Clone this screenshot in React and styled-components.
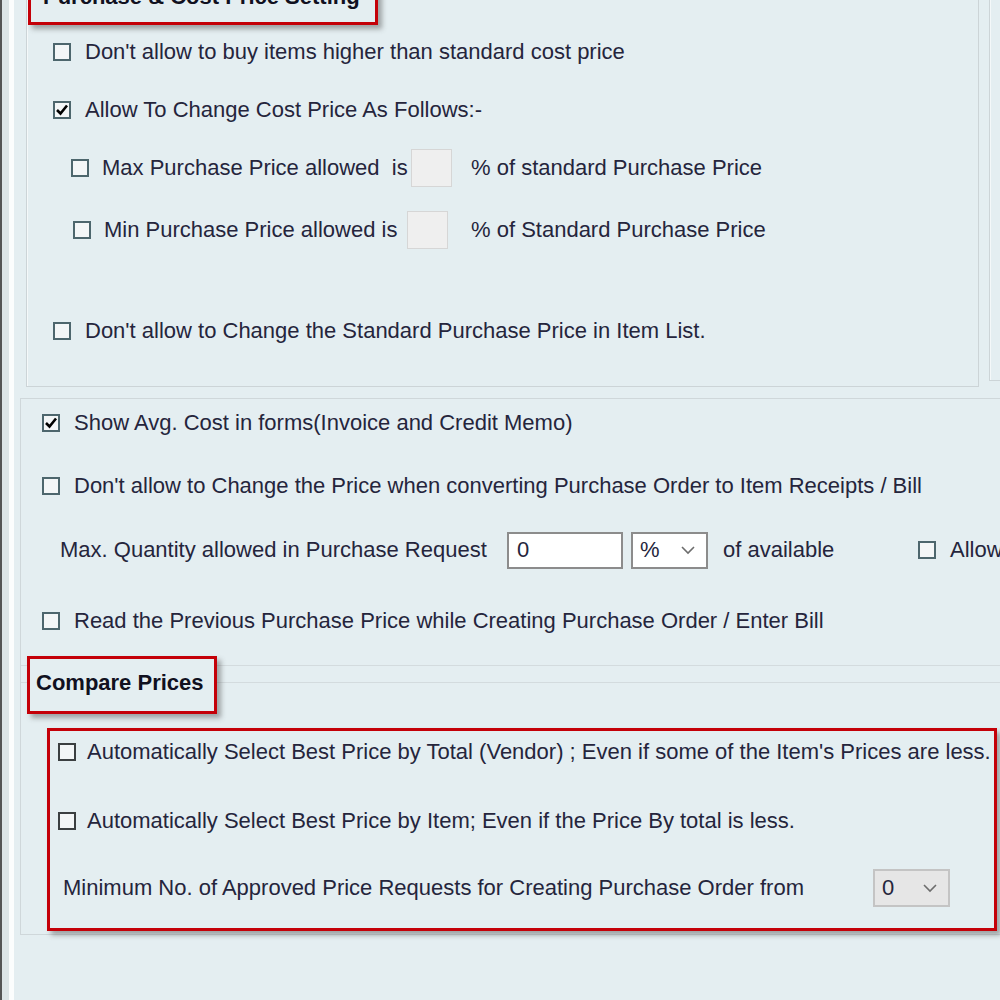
import React from 'react'
import styled, { createGlobalStyle } from 'styled-components'

const GlobalStyle = createGlobalStyle`
  body {
    margin: 0;
    background: #e4eef1;
  }
`

const Screen = styled.div`
  display: flex;
  width: 1000px;
  height: 1000px;
  overflow: hidden;
  background: #e4eef1;
  font-family: "Liberation Sans", Arial, sans-serif;
  font-size: 22px;
  color: #25253c;
`
const Edge = styled.div`
  flex: 0 0 15px;
  background: linear-gradient(to right, #555 0, #555 2px, #dde5e7 2px, #dde5e7 9px, #fbfdfd 9px, #fbfdfd 14px, #e4eef1 14px);
`
const Main = styled.div`
  flex: 1;
  display: flex;
  flex-direction: column;
  min-width: 0;
`
const TopArea = styled.div`
  display: flex;
  align-items: flex-start;
  gap: 10px;
  margin-top: -40px;
  padding-left: 11px;
`
const GroupBox = styled.div`
  box-sizing: border-box;
  flex: 0 0 ${props => props.width}px;
  height: ${props => props.height}px;
  border: 1px solid #ccd4d7;
  box-shadow: inset 1px 1px 0 #f4f8f9;
  display: flex;
  flex-direction: column;
`
const RedBox = styled.div`
  box-sizing: border-box;
  border: 3px solid #c40008;
  box-shadow: 4px 4px 5px rgba(70, 70, 70, 0.45);
`
const SectionTitle = styled(RedBox)`
  width: ${props => props.width}px;
  height: ${props => props.height}px;
  margin-left: 1px;
  padding: ${props => props.padTop}px 0 0 ${props => props.padLeft}px;
  font-weight: bold;
  line-height: 26px;
  color: #101020;
  white-space: nowrap;
`
const FloatingTitle = styled(SectionTitle)`
  position: absolute;
  top: -27px;
  left: 5px;
  background: #e4eef1;
`
const Row = styled.div`
  display: flex;
  align-items: center;
  height: 40px;
  margin-top: ${props => props.top || 0}px;
  padding-left: ${props => props.indent || 0}px;
  white-space: nowrap;
`
const Box = styled.span`
  box-sizing: border-box;
  flex: 0 0 18px;
  height: 18px;
  margin-right: ${props => props.gap || 14}px;
  border: 2px solid ${props => (props.dark ? '#3b3f41' : '#4d666d')};
  background: #f3f6f7;
  display: flex;
  align-items: center;
  justify-content: center;
`
const Label = styled.span`
  flex: 0 0 ${props => (props.width ? `${props.width}px` : 'auto')};
`
const PctBox = styled.span`
  box-sizing: border-box;
  flex: 0 0 41px;
  height: 38px;
  margin-right: ${props => props.gap}px;
  background: #efefef;
  border: 1px solid #d6d6d6;
`
const TextInput = styled.span`
  box-sizing: border-box;
  flex: 0 0 ${props => props.width}px;
  height: 37px;
  margin-right: 8px;
  padding-left: 8px;
  background: #fff;
  border: 2px solid #8c8c8c;
  display: flex;
  align-items: center;
`
const Select = styled.span`
  box-sizing: border-box;
  flex: 0 0 77px;
  height: ${props => (props.flat ? 38 : 37)}px;
  margin-right: 15px;
  padding: 0 10px 0 7px;
  background: ${props => (props.flat ? '#e6e6e6' : '#fff')};
  border: ${props => (props.flat ? '2px solid #c4c4c4' : '2px solid #8c8c8c')};
  display: flex;
  align-items: center;
  justify-content: space-between;
`
const RightGroup = styled.div`
  box-sizing: border-box;
  flex: 0 0 60px;
  height: 421px;
  border: 1px solid #ccd4d7;
  border-right: none;
  box-shadow: inset 1px 1px 0 #f4f8f9;
`
const Panel = styled.div`
  margin: 11px 0 0 5px;
  height: 537px;
  box-sizing: border-box;
  border-top: 1px solid #cfd7da;
  border-left: 1px solid #cfd7da;
  border-bottom: 1px solid #cfd7da;
  display: flex;
  flex-direction: column;
`
const Divider = styled.div`
  margin-top: 24px;
  border-top: 1px solid #d3dbde;
`
const CompareGroup = styled.div`
  position: relative;
  margin-top: 16px;
  border-top: 1px solid #d3dbde;
  display: flex;
  flex-direction: column;
`
const CompareBox = styled(RedBox)`
  width: 950px;
  height: 203px;
  margin: 45px 0 0 26px;
`

const Check = ({ checked, dark, gap }) => (
  <Box dark={dark} gap={gap}>
    {checked && (
      <svg width="14" height="14" viewBox="0 0 14 14">
        <path d="M2 7 L5.5 10.5 L12 2.5" fill="none" stroke="#000" strokeWidth="2.6" />
      </svg>
    )}
  </Box>
)

const Chevron = () => (
  <svg width="16" height="10" viewBox="0 0 16 10">
    <path d="M2 2 L8 8 L14 2" fill="none" stroke="#6d6d6d" strokeWidth="1.6" />
  </svg>
)

const App = () => (
  <Screen>
    <GlobalStyle />
    <Edge />
    <Main>
      <TopArea>
        <GroupBox width={953} height={427}>
          <SectionTitle width={350} height={64} padTop={20} padLeft={12}>
            Purchase &amp; Cost Price Setting
          </SectionTitle>
          <Row top={7} indent={26}>
            <Check />
            <Label>Don't allow to buy items higher than standard cost price</Label>
          </Row>
          <Row top={18} indent={26}>
            <Check checked />
            <Label>Allow To Change Cost Price As Follows:-</Label>
          </Row>
          <Row top={18} indent={44}>
            <Check gap={13} />
            <Label width={309}>Max Purchase Price allowed&nbsp; is</Label>
            <PctBox gap={19} />
            <Label>% of standard Purchase Price</Label>
          </Row>
          <Row top={22} indent={46}>
            <Check gap={13} />
            <Label width={303}>Min Purchase Price allowed is</Label>
            <PctBox gap={23} />
            <Label>% of Standard Purchase Price</Label>
          </Row>
          <Row top={61} indent={26}>
            <Check />
            <Label>Don't allow to Change the Standard Purchase Price in Item List.</Label>
          </Row>
        </GroupBox>
        <RightGroup />
      </TopArea>

      <Panel>
        <Row top={4} indent={21}>
          <Check checked />
          <Label>Show Avg. Cost in forms(Invoice and Credit Memo)</Label>
        </Row>
        <Row top={23} indent={21}>
          <Check />
          <Label>Don't allow to Change the Price when converting Purchase Order to Item Receipts / Bill</Label>
        </Row>
        <Row top={24} indent={39}>
          <Label width={447}>Max. Quantity allowed in Purchase Request</Label>
          <TextInput width={116}>0</TextInput>
          <Select>
            <span>%</span>
            <Chevron />
          </Select>
          <Label width={195}>of available</Label>
          <Check />
          <Label>Allow</Label>
        </Row>
        <Row top={31} indent={21}>
          <Check />
          <Label>Read the Previous Purchase Price while Creating Purchase Order / Enter Bill</Label>
        </Row>
        <Divider />
        <CompareGroup>
          <FloatingTitle width={190} height={58} padTop={11} padLeft={6}>
            Compare Prices
          </FloatingTitle>
          <CompareBox>
            <Row top={1} indent={8}>
              <Check dark gap={11} />
              <Label>Automatically Select Best Price by Total (Vendor) ; Even if some of the Item's Prices are less.</Label>
            </Row>
            <Row top={29} indent={8}>
              <Check dark gap={11} />
              <Label>Automatically Select Best Price by Item; Even if the Price By total is less.</Label>
            </Row>
            <Row top={27} indent={13}>
              <Label width={810}>Minimum No. of Approved Price Requests for Creating Purchase Order from</Label>
              <Select flat>
                <span>0</span>
                <Chevron />
              </Select>
            </Row>
          </CompareBox>
        </CompareGroup>
      </Panel>
    </Main>
  </Screen>
)

export default App
